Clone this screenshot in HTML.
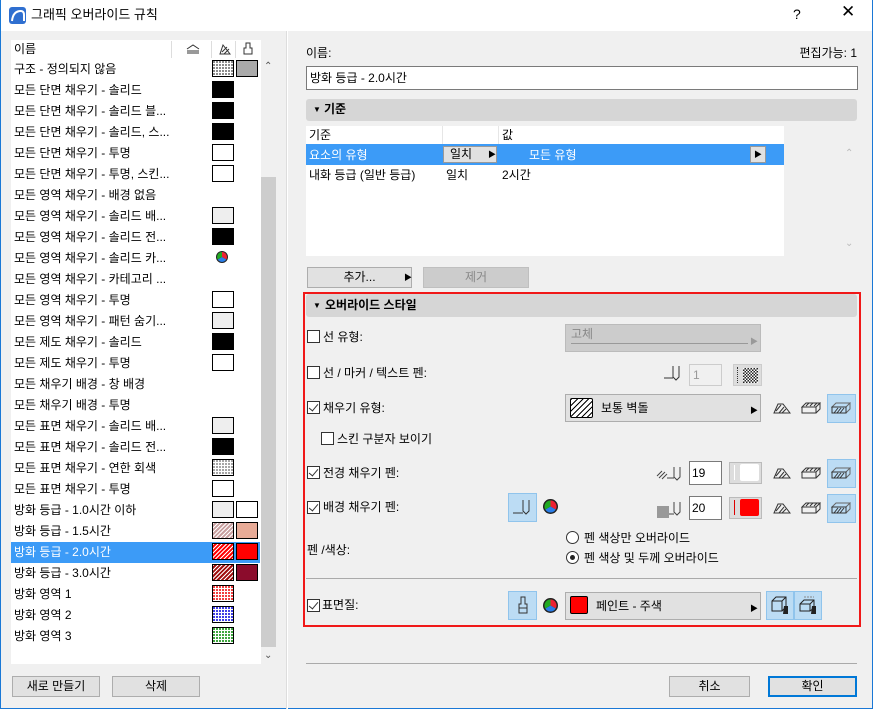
<!DOCTYPE html>
<html><head><meta charset="utf-8"><style>
*{box-sizing:border-box;margin:0;padding:0}
body{width:873px;height:709px;overflow:hidden;background:#f0f0f0;font-family:"Liberation Sans","Noto Sans CJK KR",sans-serif;font-size:12px;color:#000;position:relative}
.a{position:absolute}
.t{position:absolute;white-space:nowrap;line-height:14px}
.sw{position:absolute;width:22px;height:17px;border:1px solid #000}
.btn{position:absolute;background:#e1e1e1;border:1px solid #adadad;text-align:center;line-height:18px}
.cb{position:absolute;width:13px;height:13px;border:1px solid #333;background:#fff}
.cb.on::after{content:"";position:absolute;left:3px;top:0px;width:4px;height:8px;border:solid #333;border-width:0 1.5px 1.5px 0;transform:rotate(40deg)}
.ib{position:absolute;width:29px;height:29px;background:#bcdcf4;border:1px solid #90c4ec}
</style></head><body>
<div class="a" style="left:0;top:0;width:873px;height:709px;border:1px solid #1a78d6;border-top:none"></div>
<div class="a" style="left:1px;top:0;width:871px;height:31px;background:#fff"></div>
<svg class="a" style="left:9px;top:7px" width="17" height="17" viewBox="0 0 17 17"><rect width="17" height="17" rx="3" fill="#2f6fd0"/><path d="M3 14 Q4 4 12 4 Q15 4 15 8 L15 14" stroke="#fff" stroke-width="2" fill="none"/></svg>
<div class="t" style="left:31px;top:8px;font-size:13px">그래픽 오버라이드 규칙</div>
<div class="t" style="left:793px;top:7px;font-size:14px">?</div>
<div class="t" style="left:841px;top:5px;font-size:17px">✕</div>

<div class="a" style="left:11px;top:40px;width:250px;height:624px;background:#fff"></div>
<div class="t" style="left:14px;top:42px">이름</div>
<div class="a" style="left:171px;top:41px;width:1px;height:17px;background:#ddd"></div>
<div class="a" style="left:211px;top:41px;width:1px;height:17px;background:#ddd"></div>
<div class="a" style="left:235px;top:41px;width:1px;height:17px;background:#ddd"></div>
<svg class="a" style="left:186px;top:44px" width="14" height="10"><path d="M1 5 L7 1 L13 5 M1 7 H13 M1 9 H13" stroke="#333" fill="none"/></svg>
<svg class="a" style="left:219px;top:43px" width="12" height="12"><path d="M1 11 L11 11 L4 2 Z M3 9 L8 4 M5 11 L10 6" stroke="#333" fill="none"/></svg>
<svg class="a" style="left:243px;top:42px" width="10" height="13"><path d="M3 1 L7 1 L7 6 L9 6 L9 12 L1 12 L1 6 L3 6 Z" stroke="#333" fill="none"/></svg>
<div class="a" style="left:11px;top:542px;width:249px;height:21px;background:#3c9bf7"></div>
<div id="rows"></div>
<div class="a" style="left:261px;top:58px;width:16px;height:606px;background:#f0f0f0"></div>
<div class="a" style="left:261px;top:177px;width:15px;height:470px;background:#cdcdcd"></div>
<div class="t" style="left:264px;top:60px;font-size:10px;color:#555">⌃</div>
<div class="t" style="left:264px;top:649px;font-size:10px;color:#555">⌄</div>
<div class="btn" style="left:12px;top:676px;width:88px;height:21px">새로 만들기</div>
<div class="btn" style="left:112px;top:676px;width:88px;height:21px">삭제</div>
<div class="a" style="left:287px;top:31px;width:1px;height:678px;background:#fff"></div>
<div class="a" style="left:286px;top:31px;width:1px;height:678px;background:#ddd"></div>

<div class="t" style="left:306px;top:46px">이름:</div>
<div class="t" style="right:16px;top:46px">편집가능: 1</div>
<div class="a" style="left:306px;top:66px;width:552px;height:24px;background:#fff;border:1px solid #7a7a7a"></div>
<div class="t" style="left:310px;top:71px">방화 등급 - 2.0시간</div>
<div class="a" style="left:306px;top:99px;width:551px;height:22px;background:#d6d6d6;border-radius:3px"></div>
<div class="t" style="left:313px;top:103px;font-size:8px">▼</div>
<div class="t" style="left:324px;top:102px;font-weight:bold">기준</div>
<div class="a" style="left:306px;top:126px;width:478px;height:130px;background:#fff"></div>
<div class="a" style="left:442px;top:126px;width:1px;height:18px;background:#e6e6e6"></div>
<div class="a" style="left:498px;top:126px;width:1px;height:18px;background:#e6e6e6"></div>
<div class="t" style="left:309px;top:128px">기준</div>
<div class="t" style="left:502px;top:128px">값</div>
<div class="a" style="left:306px;top:144px;width:478px;height:21px;background:#3c9bf7"></div>
<div class="t" style="left:309px;top:148px;color:#fff">요소의 유형</div>
<div class="a" style="left:443px;top:146px;width:54px;height:17px;background:#e1e1e1;border:1px solid #999"></div>
<div class="t" style="left:450px;top:147px">일치</div>
<div class="t" style="left:488px;top:148px;font-size:8px">▶</div>
<div class="t" style="left:529px;top:148px;color:#fff">모든 유형</div>
<div class="a" style="left:750px;top:146px;width:16px;height:17px;background:#e1e1e1;border:1px solid #999"></div>
<div class="t" style="left:754px;top:148px;font-size:8px">▶</div>
<div class="t" style="left:309px;top:168px">내화 등급 (일반 등급)</div>
<div class="t" style="left:446px;top:168px">일치</div>
<div class="t" style="left:502px;top:168px">2시간</div>
<div class="t" style="left:845px;top:147px;font-size:10px;color:#bbb">⌃</div>
<div class="t" style="left:845px;top:237px;font-size:10px;color:#bbb">⌄</div>
<div class="btn" style="left:307px;top:267px;width:105px;height:21px">추가...</div>
<div class="t" style="left:404px;top:271px;font-size:8px">▶</div>
<div class="btn" style="left:423px;top:267px;width:106px;height:21px;background:#ccc;border-color:#bfbfbf;color:#888">제거</div>

<div class="a" style="left:303px;top:292px;width:558px;height:335px;border:2px solid #f01818"></div>
<div class="a" style="left:306px;top:294px;width:551px;height:23px;background:#d6d6d6;border-radius:3px"></div>
<div class="t" style="left:313px;top:299px;font-size:8px">▼</div>
<div class="t" style="left:325px;top:298px;font-weight:bold">오버라이드 스타일</div>

<div class="cb" style="left:307px;top:330px"></div><div class="t" style="left:323px;top:330px">선 유형:</div>
<div class="a" style="left:565px;top:324px;width:196px;height:28px;background:#ccc;border:1px solid #bbb"></div>
<div class="t" style="left:571px;top:327px;color:#888">고체</div>
<div class="a" style="left:571px;top:343px;width:177px;height:1px;background:#999"></div>
<div class="t" style="left:750px;top:335px;font-size:8px;color:#999">▶</div>

<div class="cb" style="left:307px;top:366px"></div><div class="t" style="left:323px;top:366px">선 / 마커 / 텍스트 펜:</div>
<svg class="a" style="left:663px;top:365px" width="20" height="16"><path d="M1 13 H10 M10 1 V12 L13 15 L16 12 V1" stroke="#333" fill="none"/></svg>
<div class="a" style="left:689px;top:364px;width:33px;height:22px;background:#f0f0f0;border:1px solid #ccc"></div>
<div class="t" style="left:693px;top:368px;color:#999">1</div>
<div class="a" style="left:733px;top:364px;width:29px;height:22px;background:#ddd;border:1px solid #ccc"></div>
<div class="a" style="left:737px;top:367px;width:1px;height:16px;border-left:1px dotted #333"></div>
<div class="a" style="left:743px;top:368px;width:15px;height:15px;background:repeating-conic-gradient(#222 0 25%,#fff 0 50%) 0 0/3px 3px"></div>

<div class="cb on" style="left:307px;top:401px"></div><div class="t" style="left:323px;top:401px">채우기 유형:</div>
<div class="a" style="left:565px;top:394px;width:196px;height:28px;background:#e1e1e1;border:1px solid #adadad"></div>
<div class="a" style="left:570px;top:398px;width:23px;height:20px;border:1px solid #000;border-radius:2px;background:repeating-linear-gradient(135deg,#000 0 1px,#fff 1px 4px)"></div>
<div class="t" style="left:601px;top:401px">보통 벽돌</div>
<div class="t" style="left:750px;top:404px;font-size:8px">▶</div>

<div class="cb" style="left:321px;top:432px"></div><div class="t" style="left:337px;top:432px">스킨 구분자 보이기</div>

<div class="cb on" style="left:307px;top:466px"></div><div class="t" style="left:323px;top:466px">전경 채우기 펜:</div>
<svg class="a" style="left:656px;top:464px" width="28" height="18"><path d="M1 12 L6 7 M3 14 L9 8 M6 15 L11 10 M11 14 H18 M18 3 V13 L21 16 L24 13 V3" stroke="#444" fill="none"/></svg>
<div class="a" style="left:689px;top:461px;width:33px;height:24px;background:#fff;border:1px solid #7a7a7a"></div>
<div class="t" style="left:692px;top:466px">19</div>
<div class="a" style="left:729px;top:462px;width:33px;height:22px;background:#ddd;border:1px solid #bbb"></div>
<div class="a" style="left:734px;top:465px;width:1px;height:15px;background:#fff"></div>
<div class="a" style="left:740px;top:464px;width:19px;height:17px;background:#fff;border-radius:2px"></div>

<div class="cb on" style="left:307px;top:501px"></div><div class="t" style="left:323px;top:500px">배경 채우기 펜:</div>
<div class="ib" style="left:508px;top:493px"></div>
<svg class="a" style="left:511px;top:497px" width="24" height="20"><path d="M2 16 H12 M12 3 V14 L15 17 L18 14 V3" stroke="#333" fill="none"/></svg>
<svg class="a" style="left:542px;top:498px" width="17" height="17"><circle cx="8.5" cy="8.5" r="7.5" fill="#222"/><path d="M8.5 8.5 L8.5 2.5 A6 6 0 0 1 13.7 11.5Z" fill="#e23"/><path d="M8.5 8.5 L13.7 11.5 A6 6 0 0 1 3.3 11.5Z" fill="#2a7ee8"/><path d="M8.5 8.5 L3.3 11.5 A6 6 0 0 1 8.5 2.5Z" fill="#2a2"/></svg>
<div class="a" style="left:657px;top:506px;width:12px;height:12px;background:#999"></div>
<svg class="a" style="left:668px;top:499px" width="16" height="20"><path d="M1 15 H6 M6 3 V13 L9 16 L12 13 V3" stroke="#444" fill="none"/></svg>
<div class="a" style="left:689px;top:496px;width:33px;height:24px;background:#fff;border:1px solid #7a7a7a"></div>
<div class="t" style="left:692px;top:501px">20</div>
<div class="a" style="left:729px;top:497px;width:33px;height:22px;background:#ddd;border:1px solid #bbb"></div>
<div class="a" style="left:734px;top:500px;width:1px;height:15px;background:#d00"></div>
<div class="a" style="left:740px;top:499px;width:19px;height:17px;background:#f00;border-radius:2px"></div>

<div id="icons"></div>

<div class="t" style="left:307px;top:543px">펜 /색상:</div>
<div class="a" style="left:566px;top:531px;width:13px;height:13px;border:1px solid #333;border-radius:50%;background:#fff"></div>
<div class="t" style="left:584px;top:531px">펜 색상만 오버라이드</div>
<div class="a" style="left:566px;top:551px;width:13px;height:13px;border:1px solid #333;border-radius:50%;background:#fff"></div>
<div class="a" style="left:570px;top:555px;width:5px;height:5px;border-radius:50%;background:#222"></div>
<div class="t" style="left:584px;top:551px">펜 색상 및 두께 오버라이드</div>
<div class="a" style="left:306px;top:578px;width:551px;height:1px;background:#aaa"></div>

<div class="cb on" style="left:307px;top:599px"></div><div class="t" style="left:322px;top:598px">표면질:</div>
<div class="ib" style="left:508px;top:591px"></div>
<svg class="a" style="left:516px;top:595px" width="14" height="20"><path d="M5 2 H9 V9 H11 V18 H3 V9 H5 Z M3 13 H11" stroke="#333" fill="none"/></svg>
<svg class="a" style="left:542px;top:597px" width="17" height="17"><circle cx="8.5" cy="8.5" r="7.5" fill="#222"/><path d="M8.5 8.5 L8.5 2.5 A6 6 0 0 1 13.7 11.5Z" fill="#e23"/><path d="M8.5 8.5 L13.7 11.5 A6 6 0 0 1 3.3 11.5Z" fill="#2a7ee8"/><path d="M8.5 8.5 L3.3 11.5 A6 6 0 0 1 8.5 2.5Z" fill="#2a2"/></svg>
<div class="a" style="left:565px;top:592px;width:196px;height:28px;background:#e1e1e1;border:1px solid #adadad"></div>
<div class="a" style="left:570px;top:596px;width:18px;height:18px;background:#f00;border:1px solid #000;border-radius:2px"></div>
<div class="t" style="left:596px;top:599px">페인트 - 주색</div>
<div class="t" style="left:750px;top:602px;font-size:8px">▶</div>
<div class="ib" style="left:766px;top:591px;width:28px"></div>
<div class="ib" style="left:794px;top:591px;width:28px"></div>
<svg class="a" style="left:769px;top:594px" width="22" height="22"><path d="M3 7 L7 3 H17 V13 L13 17 H3 Z M3 7 H13 V17 M13 7 L17 3" stroke="#222" fill="none"/><path d="M15 12 H19 V20 H14 Z" fill="#222"/></svg>
<svg class="a" style="left:797px;top:594px" width="22" height="22"><path d="M3 10 L7 6 H17 V14 L13 17 H3 Z M3 10 H13 V17 M13 10 L17 6" stroke="#222" fill="none"/><path d="M7 3 H17" stroke="#888" stroke-dasharray="2 1"/><path d="M15 12 H19 V20 H14 Z" fill="#222"/></svg>

<div class="a" style="left:306px;top:663px;width:551px;height:1px;background:#aaa"></div>
<div class="btn" style="left:669px;top:676px;width:81px;height:21px">취소</div>
<div class="btn" style="left:768px;top:676px;width:89px;height:21px;border:2px solid #0078d7;line-height:17px">확인</div>

<script>
var R=[
["구조 - 정의되지 않음","dot:#666","#aaa"],
["모든 단면 채우기 - 솔리드","#000"],
["모든 단면 채우기 - 솔리드 블...","#000"],
["모든 단면 채우기 - 솔리드, 스...","#000"],
["모든 단면 채우기 - 투명","#fff"],
["모든 단면 채우기 - 투명, 스킨...","#fff"],
["모든 영역 채우기 - 배경 없음"],
["모든 영역 채우기 - 솔리드 배...","#eee"],
["모든 영역 채우기 - 솔리드 전...","#000"],
["모든 영역 채우기 - 솔리드 카...","wheel"],
["모든 영역 채우기 - 카테고리 ..."],
["모든 영역 채우기 - 투명","#fff"],
["모든 영역 채우기 - 패턴 숨기...","#eee"],
["모든 제도 채우기 - 솔리드","#000"],
["모든 제도 채우기 - 투명","#fff"],
["모든 채우기 배경 - 창 배경"],
["모든 채우기 배경 - 투명"],
["모든 표면 채우기 - 솔리드 배...","#eee"],
["모든 표면 채우기 - 솔리드 전...","#000"],
["모든 표면 채우기 - 연한 회색","dot:#888"],
["모든 표면 채우기 - 투명","#fff"],
["방화 등급 - 1.0시간 이하","#eee","#fff"],
["방화 등급 - 1.5시간","hat:#c9a0a0","#e8ab97"],
["방화 등급 - 2.0시간","hat:#f00","#f00"],
["방화 등급 - 3.0시간","hat:#a01010","#8b0c2c"],
["방화 영역 1","dot:#e00"],
["방화 영역 2","dot:#00d"],
["방화 영역 3","dot:#080"]];
var h="";
function sw(v,x,y){if(v=="wheel")return '<svg class="a" style="left:'+(x+3)+'px;top:'+(y+1)+'px" width="14" height="14"><circle cx="7" cy="7" r="6" fill="#222"/><path d="M7 7 V2 A5 5 0 0 1 11.3 9.5Z" fill="#e23"/><path d="M7 7 L11.3 9.5 A5 5 0 0 1 2.7 9.5Z" fill="#2a7ee8"/><path d="M7 7 L2.7 9.5 A5 5 0 0 1 7 2Z" fill="#2a2"/></svg>';
var bg=v;if(v.indexOf("dot:")==0)bg="radial-gradient(circle at 1px 1px,"+v.slice(4)+" 0.8px,#fff 1px) 0 0/3px 3px";if(v.indexOf("hat:")==0)bg="repeating-linear-gradient(135deg,#fff 0 1px,"+v.slice(4)+" 1px 3px)";
return '<div class="sw" style="left:'+x+'px;top:'+y+'px;background:'+bg+'"></div>';}
R.forEach(function(r,i){var y=58+21*i;h+='<div class="t" style="left:14px;top:'+(y+4)+'px;'+(i==23?'color:#fff':'')+'">'+r[0]+'</div>';
if(r[1])h+=sw(r[1],212,y+2);if(r[2])h+=sw(r[2],236,y+2);});
document.getElementById("rows").innerHTML=h;
var ic="";[394,459,494].forEach(function(y){
ic+='<svg class="a" style="left:773px;top:'+(y+8)+'px" width="18" height="12"><path d="M1 11 L5 2 H10 L17 11 Z M3 9 L8 3 M6 11 L11 5 M9 11 L13 7" stroke="#333" fill="none"/></svg>';
ic+='<svg class="a" style="left:801px;top:'+(y+8)+'px" width="20" height="12"><path d="M1 5 L5 1 H19 L15 5 Z M1 5 V11 H15 V5 M15 11 L19 7 V1 M5 4 L8 1 M9 4 L12 1 M13 4 L16 1" stroke="#333" fill="none"/></svg>';
ic+='<div class="ib" style="left:827px;top:'+y+'px"></div><svg class="a" style="left:831px;top:'+(y+8)+'px" width="20" height="12"><path d="M1 5 L5 1 H19 L15 5 Z M15 11 L19 7 V1" stroke="#666" fill="none"/><rect x="1" y="5" width="14" height="6" fill="none" stroke="#333"/><path d="M3 11 L7 6 M6 11 L10 6 M9 11 L13 6" stroke="#333"/></svg>';});
document.getElementById("icons").innerHTML=ic;
</script>
</body></html>
